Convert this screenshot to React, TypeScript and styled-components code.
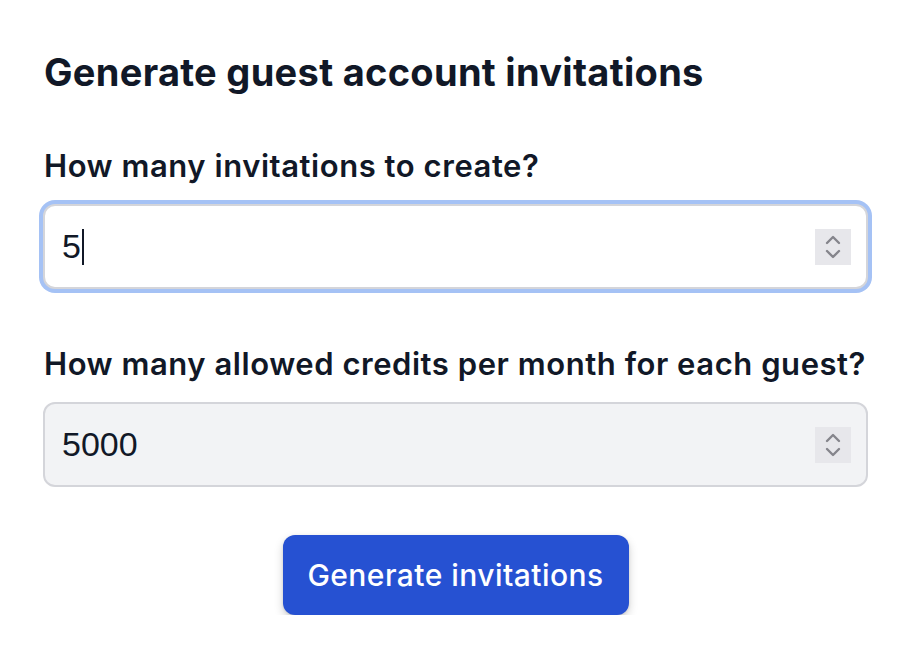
import React from "react";
import styled, { createGlobalStyle } from "styled-components";

const Global = createGlobalStyle`
  html, body { margin: 0; padding: 0; background: #ffffff; }
  body { font-family: Inter, "Noto Sans", sans-serif; color: #111827; }
`;

const Page = styled.div`
  padding: 48px 40px 0 43px;
  width: 825px;
  display: flex;
  flex-direction: column;
`;

const Title = styled.h1`
  margin: 0 0 50px 1px;
  font-size: 38px;
  line-height: 48px;
  font-weight: 700;
  letter-spacing: 0.3px;
  color: #111827;
`;

const Label = styled.label`
  display: block;
  margin: 0 0 18px 1px;
  font-size: 31px;
  line-height: 40px;
  font-weight: 600;
  letter-spacing: 0.55px;
  white-space: nowrap;
  color: #111827;
`;

const Field = styled.div<{ $focused?: boolean; $muted?: boolean }>`
  box-sizing: border-box;
  width: 825px;
  height: 85px;
  border: 2px solid #d4d5da;
  border-radius: 12px;
  background: ${(p) => (p.$muted ? "#f2f3f5" : "#ffffff")};
  box-shadow: ${(p) => (p.$focused ? "0 0 0 4px #a5c2f5" : "none")};
  display: flex;
  align-items: center;
  padding: 0 15px 0 17px;
  margin-bottom: ${(p) => (p.$focused ? "55px" : "48px")};
`;

const Value = styled.span`
  flex: 1;
  display: flex;
  align-items: center;
  font-family: "Liberation Sans", Arial, sans-serif;
  font-size: 34px;
  color: #111827;
`;

const Caret = styled.span`
  display: inline-block;
  width: 2px;
  height: 36px;
  background: #111827;
  margin-left: 1px;
`;

const Spinner = styled.span`
  width: 36px;
  height: 36px;
  background: #e7e7eb;
  display: flex;
  align-items: center;
  justify-content: center;
`;

const Actions = styled.div`
  display: flex;
  justify-content: center;
`;

const Button = styled.button`
  width: 346px;
  height: 80px;
  border: none;
  border-radius: 12px;
  background: #2651d2;
  color: #ffffff;
  font-family: Inter, "Noto Sans", sans-serif;
  font-size: 30px;
  font-weight: 500;
  letter-spacing: 0.45px;
  box-shadow: 0 4px 10px rgba(0, 0, 0, 0.18), 0 1px 3px rgba(0, 0, 0, 0.1);
  cursor: pointer;
`;

const SpinIcon = () => (
  <svg width="20" height="28" viewBox="0 0 20 28" fill="none">
    <path d="M4 10 L10 4 L16 10" stroke="#85858c" strokeWidth="2.4" strokeLinecap="round" strokeLinejoin="round" />
    <path d="M4 18 L10 24 L16 18" stroke="#85858c" strokeWidth="2.4" strokeLinecap="round" strokeLinejoin="round" />
  </svg>
);

export default function App() {
  return (
    <>
      <Global />
      <Page>
        <Title>Generate guest account invitations</Title>
        <Label>How many invitations to create?</Label>
        <Field $focused>
          <Value>
            5<Caret />
          </Value>
          <Spinner>
            <SpinIcon />
          </Spinner>
        </Field>
        <Label>How many allowed credits per month for each guest?</Label>
        <Field $muted>
          <Value>5000</Value>
          <Spinner>
            <SpinIcon />
          </Spinner>
        </Field>
        <Actions>
          <Button>Generate invitations</Button>
        </Actions>
      </Page>
    </>
  );
}
